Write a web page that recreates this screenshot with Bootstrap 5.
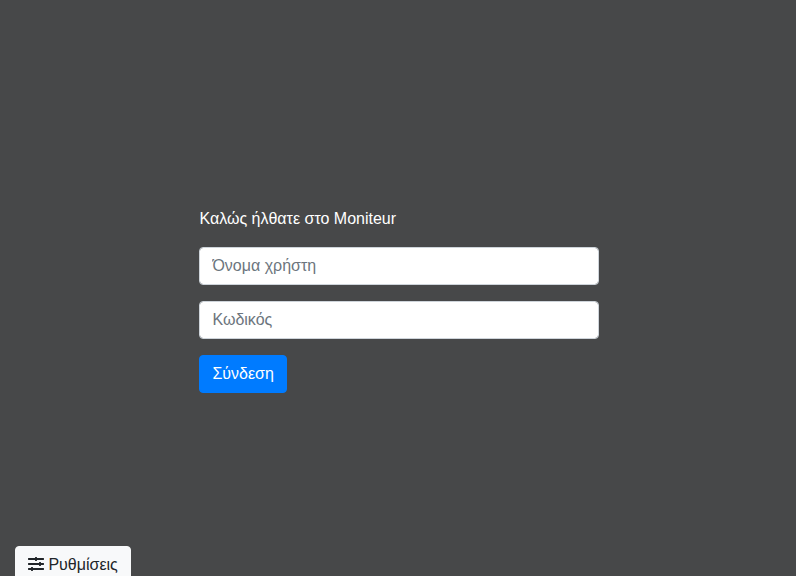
<!DOCTYPE html>
<html lang="el">
<head>
<meta charset="utf-8">
<meta name="viewport" content="width=device-width, initial-scale=1">
<title>Moniteur</title>
<link href="https://cdn.jsdelivr.net/npm/bootstrap@5.3.0/dist/css/bootstrap.min.css" rel="stylesheet">
<style>
body { background: #474849; font-family: "Liberation Sans", Arial, sans-serif; }
.page { height: 576px; padding-top: 207px; overflow: hidden; }
.login { width: 399.5px; margin-left: 199.45px; }
.login .form-control { border-color: #ced4da; border-radius: 4px; color: #495057; }
.login .form-control::placeholder { color: #6c757d; }
.btn { border-radius: 4px; }
.btn-primary { --bs-btn-bg: #007bff; --bs-btn-border-color: #007bff; }
.btn-light { --bs-btn-color: #212529; }
.settings { margin: auto 0 -8px 15px; }
.settings svg { display: inline-block; vertical-align: -2px; }
</style>
</head>
<body>
<div class="page d-flex flex-column align-items-start">
  <form class="login">
    <p class="text-white mb-3">Καλώς ήλθατε στο Moniteur</p>
    <input type="text" class="form-control mb-3" placeholder="Όνομα χρήστη">
    <input type="password" class="form-control mb-3" placeholder="Κωδικός">
    <button type="button" class="btn btn-primary">Σύνδεση</button>
  </form>
  <button type="button" class="btn btn-light settings"><svg width="16" height="16" viewBox="0 0 512 512" fill="currentColor" aria-hidden="true"><path d="M496 384H160v-16c0-8.800-7.200-16-16-16h-32c-8.800 0-16 7.200-16 16v16H16c-8.800 0-16 7.200-16 16v32c0 8.800 7.200 16 16 16h80v16c0 8.800 7.200 16 16 16h32c8.800 0 16-7.200 16-16v-16h336c8.800 0 16-7.200 16-16v-32c0-8.800-7.200-16-16-16zm0-160h-80v-16c0-8.800-7.200-16-16-16h-32c-8.800 0-16 7.200-16 16v16H16c-8.800 0-16 7.200-16 16v32c0 8.800 7.200 16 16 16h336v16c0 8.800 7.200 16 16 16h32c8.800 0 16-7.200 16-16v-16h80c8.800 0 16-7.200 16-16v-32c0-8.800-7.200-16-16-16zm0-160H288V48c0-8.800-7.200-16-16-16h-32c-8.800 0-16 7.200-16 16v16H16C7.200 64 0 71.200 0 80v32c0 8.800 7.200 16 16 16h208v16c0 8.800 7.200 16 16 16h32c8.800 0 16-7.200 16-16v-16h208c8.800 0 16-7.200 16-16V80c0-8.800-7.200-16-16-16z"/></svg> Ρυθμίσεις</button>
</div>
</body>
</html>
